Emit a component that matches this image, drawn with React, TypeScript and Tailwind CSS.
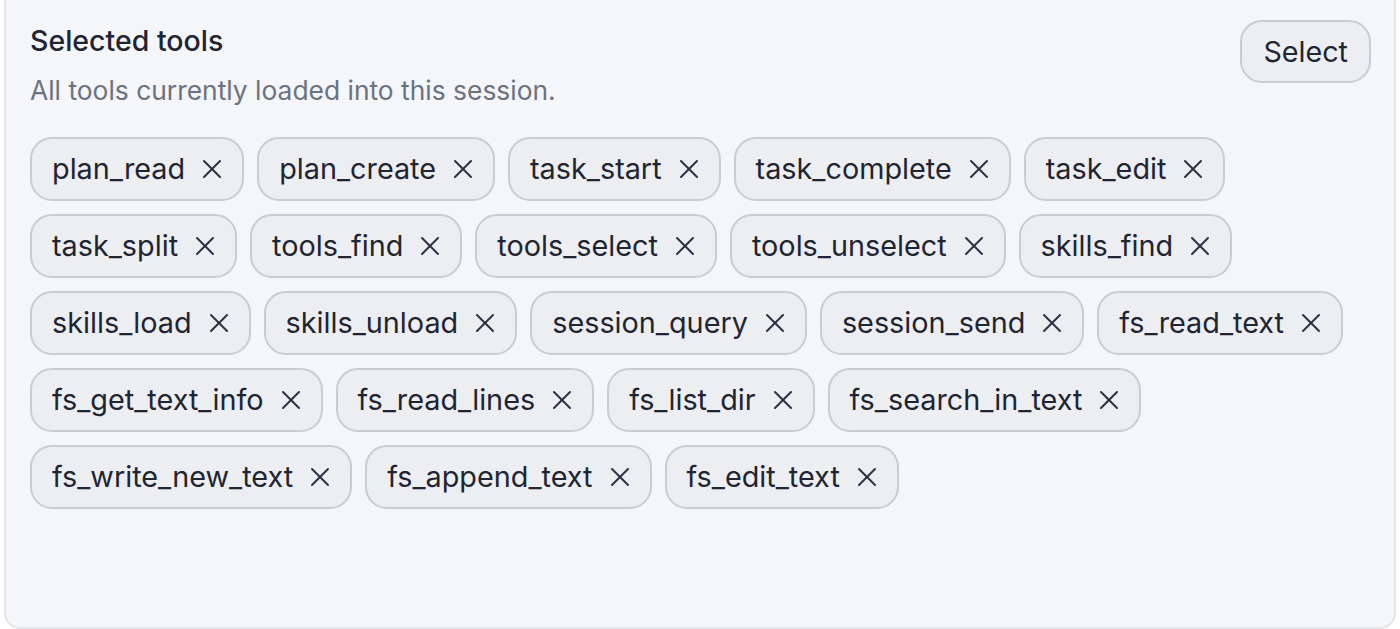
import { X } from "lucide-react";

const tools = [
  "plan_read",
  "plan_create",
  "task_start",
  "task_complete",
  "task_edit",
  "task_split",
  "tools_find",
  "tools_select",
  "tools_unselect",
  "skills_find",
  "skills_load",
  "skills_unload",
  "session_query",
  "session_send",
  "fs_read_text",
  "fs_get_text_info",
  "fs_read_lines",
  "fs_list_dir",
  "fs_search_in_text",
  "fs_write_new_text",
  "fs_append_text",
  "fs_edit_text",
];

function ToolChip({ name }: { name: string }) {
  return (
    <span className="h-16 flex items-center gap-[11px] pl-[20px] pr-[14px] rounded-[22px] border-2 border-[#c9ccd1] bg-[#eceef1] text-[28.8px] text-[#1f2532]">
      {name}
      <button type="button" className="text-[#2b3140]">
        <X className="size-8" strokeWidth={1.5} />
      </button>
    </span>
  );
}

export default function App() {
  return (
    <div className="h-[629px] bg-white overflow-hidden font-['Inter',sans-serif]">
      <div className="-mt-4 mx-[4px] h-[645px] rounded-b-2xl border-2 border-[#e3e5e9] bg-[#f4f6f9] pt-[37px] pl-[24px] pr-[24px]">
        <div className="flex items-start justify-between">
          <div>
            <h2 className="text-[28.5px] leading-[36px] font-medium text-[#1f2532]">Selected tools</h2>
            <p className="mt-[15px] text-[26.4px] leading-[32px] text-[#6b7280]">
              All tools currently loaded into this session.
            </p>
          </div>
          <button
            type="button"
            className="-mt-[3px] -mr-[1px] h-[63px] px-[21px] rounded-[22px] border-2 border-[#c9ccd1] bg-[#eceef1] text-[28.7px] text-[#1f2532]"
          >
            Select
          </button>
        </div>
        <div className="mt-[31px] flex flex-wrap gap-[13px]">
          {tools.map((t) => (
            <ToolChip key={t} name={t} />
          ))}
        </div>
      </div>
    </div>
  );
}
